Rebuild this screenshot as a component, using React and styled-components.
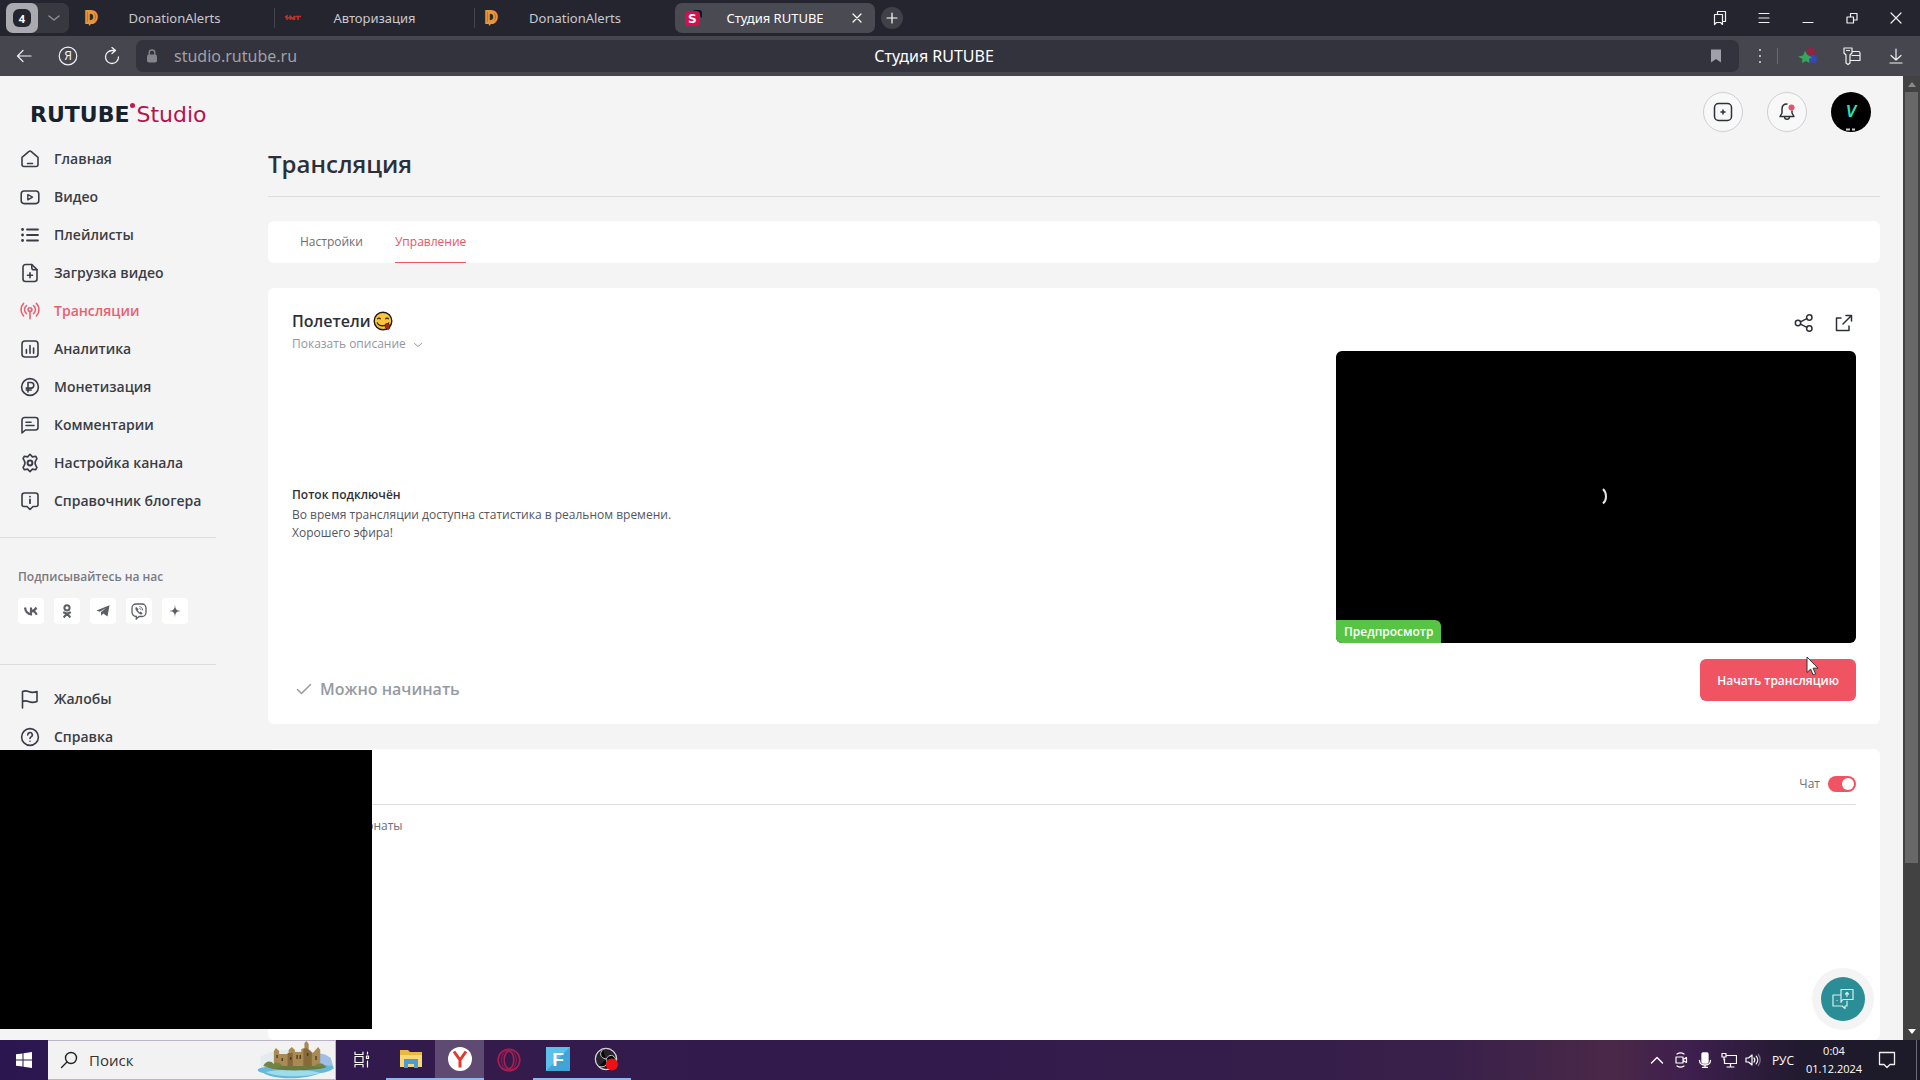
import React, { useState } from "react";
import styled, { createGlobalStyle } from "styled-components";

const GlobalStyle = createGlobalStyle`
  * {
    box-sizing: border-box;
  }

  body {
    margin: 0;
    overflow: hidden;
    font-family: "Open Sans", "Noto Sans", sans-serif;
    color: #2d3038;
  }

  button, input {
    font-family: inherit;
    padding: 0;
    border: 0;
    background: none;
    color: inherit;
  }

  svg {
    display: block;
    flex: none;
  }
`;

const Desktop = styled.div`
  position: relative;
  display: flex;
  flex-direction: column;
  height: 100vh;
`;

/* ---------- browser ---------- */

const TabBar = styled.header`
  display: flex;
  align-items: center;
  height: 36px;
  flex: none;
  padding: 0 2px 0 6px;
  background: #25252f;
  color: #c9c9cf;
  font-family: "Noto Sans", sans-serif;
`;

const TabGroup = styled.div`
  display: flex;
  width: 63px;
  height: 30px;
  margin-right: 6px;
  border-radius: 7px;
  background: #383841;
`;

const TabCount = styled.button`
  display: grid;
  place-items: center;
  width: 32px;
  height: 30px;
  border-radius: 7px;
  background: #aaaab0;
`;

const TabCountValue = styled.span`
  display: grid;
  place-items: center;
  width: 18px;
  height: 18px;
  border-radius: 6px;
  background: #25252f;
  color: #fff;
  font-size: 11px;
  font-weight: 700;
`;

const GroupArrow = styled.button`
  display: grid;
  place-items: center;
  flex: 1;
  color: #8b8b93;
`;

const Tab = styled.div`
  display: flex;
  align-items: center;
  width: 200px;
  height: ${(p) => (p.$active ? 30 : 20)}px;
  padding: 0 8px;
  border-radius: ${(p) => (p.$active ? 7 : 0)}px;
  border-right: ${(p) => (p.$divider ? "1px solid #45454e" : "0")};
  background: ${(p) => (p.$active ? "#4a4a53" : "none")};
  color: ${(p) => (p.$active ? "#fff" : "#c9c9cf")};
`;

const TabTitle = styled.button`
  flex: 1;
  color: inherit;
  font-size: 13px;
  line-height: 20px;
  text-align: center;
`;

const TabIcon = styled.span`
  display: grid;
  place-items: center;
  width: 20px;
`;

const TabClose = styled.button`
  display: grid;
  place-items: center;
  width: 20px;
  height: 20px;
`;

const NewTab = styled.button`
  display: grid;
  place-items: center;
  width: 22px;
  height: 22px;
  margin-left: 6px;
  border-radius: 50%;
  background: #41414a;
  color: #fff;
`;

const ChromeButton = styled.button`
  display: grid;
  place-items: center;
  width: 44px;
  height: 36px;
  color: #f0f0f2;
`;

const Spacer = styled.div`
  flex: 1;
`;

const Toolbar = styled.div`
  display: flex;
  align-items: center;
  height: 40px;
  flex: none;
  padding: 0 2px;
  background: #46464f;
`;

const AddressBar = styled.div`
  display: flex;
  align-items: center;
  flex: 1;
  height: 32px;
  margin-left: 2px;
  padding: 0 15px 0 8px;
  border-radius: 7px;
  background: #33333d;
  font-family: "Noto Sans", sans-serif;
  font-size: 16px;
  color: #fff;
`;

const AddressSide = styled.div`
  display: flex;
  align-items: center;
  flex: 1;
  gap: 14px;
  justify-content: ${(p) => (p.$end ? "flex-end" : "flex-start")};
  color: #84848d;
`;

const AddressInput = styled.input`
  width: 300px;
  height: 24px;
  font-size: 16px;
  color: #a0a0a8;
`;

const ToolbarDivider = styled.span`
  width: 1px;
  height: 16px;
  background: #696972;
`;

const BrowserTools = styled.div`
  display: flex;
  align-items: center;
  padding-left: 4px;
`;

const SmallTool = styled(ChromeButton)`
  width: 34px;
`;

const WideTool = styled(ChromeButton)`
  padding-left: 8px;
  width: 52px;
`;

/* ---------- page ---------- */

const Viewport = styled.div`
  display: flex;
  flex: 1;
  min-height: 0;
  overflow: hidden;
  background: #f4f4f5;
`;

const Sidebar = styled.aside`
  width: 216px;
  flex: none;
`;

const Logo = styled.a`
  display: flex;
  align-items: center;
  height: 64px;
  padding: 12px 0 0 30px;
  font-family: "DejaVu Sans", sans-serif;
  font-size: 22px;
  color: #17222f;
  text-decoration: none;

  b {
    font-weight: 700;
  }

  span {
    color: #b5124f;
  }
`;

const LogoDot = styled.i`
  width: 5px;
  height: 5px;
  margin: 0 1px 18px;
  border-radius: 50%;
  background: #c8144f;
`;

const Nav = styled.nav`
  display: flex;
  flex-direction: column;
  padding-bottom: 17px;
  border-bottom: ${(p) => (p.$last ? "0" : "1px solid #dddde0")};
  padding-top: ${(p) => (p.$last ? 15 : 0)}px;
`;

const NavLink = styled.a`
  display: flex;
  align-items: center;
  gap: 14px;
  height: 38px;
  padding-left: 20px;
  color: ${(p) => (p.$active ? "#ea5f70" : "#3a3d45")};
  font-size: 14px;
  font-weight: 600;
  line-height: 20px;
  text-decoration: none;
`;

const Follow = styled.section`
  padding: 29px 0 40px 18px;
  border-bottom: 1px solid #dddde0;
`;

const FollowTitle = styled.h2`
  margin: 0 0 11px;
  color: #787a82;
  font-size: 12px;
  font-weight: 600;
  line-height: 20px;
`;

const SocialList = styled.div`
  display: flex;
  gap: 10px;
`;

const SocialLink = styled.a`
  display: grid;
  place-items: center;
  width: 26px;
  height: 26px;
  border-radius: 4px;
  background: #fff;
  color: #5c5e66;
`;

const Main = styled.main`
  display: flex;
  flex-direction: column;
  flex: 1;
  padding: 16px 23px 0 52px;
`;

const UserBar = styled.div`
  display: flex;
  justify-content: flex-end;
  gap: 24px;
  height: 56px;
  padding-right: 9px;
`;

const RoundButton = styled.button`
  display: grid;
  place-items: center;
  width: 40px;
  height: 40px;
  overflow: hidden;
  border: ${(p) => (p.$dark ? "0" : "1px solid #cfcfd3")};
  border-radius: 50%;
  background: ${(p) => (p.$dark ? "#000" : "#f8f8f9")};
`;

const PageTitle = styled.h1`
  margin: 0;
  padding-bottom: 16px;
  border-bottom: 1px solid #dddde0;
  font-size: 24px;
  font-weight: 600;
  line-height: 32px;
`;

const Card = styled.section`
  margin-top: ${(p) => p.$top || 25}px;
  padding: ${(p) => p.$pad || "0 24px"};
  flex: ${(p) => (p.$grow ? 1 : "none")};
  border-radius: 6px;
  background: #fff;
`;

const PageTabs = styled(Card)`
  display: flex;
  gap: 32px;
  padding: 0 32px;
`;

const PageTab = styled.button`
  height: 42px;
  padding-top: 1px;
  border-bottom: 1px solid ${(p) => (p.$active ? "#ea5567" : "transparent")};
  color: ${(p) => (p.$active ? "#ea5567" : "#6c6e76")};
  font-size: 12px;
  line-height: 18px;
`;

const CardHead = styled.div`
  display: flex;
  justify-content: space-between;
  height: 42px;
`;

const StreamTitle = styled.h2`
  display: flex;
  align-items: center;
  gap: 2px;
  margin: 0 0 3px;
  font-size: 16px;
  font-weight: 600;
  line-height: 24px;
`;

const DescriptionToggle = styled.button`
  display: flex;
  align-items: center;
  gap: 8px;
  color: #93979f;
  font-size: 12px;
  line-height: 16px;
`;

const Actions = styled.div`
  display: flex;
  gap: 16px;
  padding-top: 2px;
`;

const IconButton = styled.button`
  display: grid;
  place-items: center;
  width: 24px;
  height: 24px;
`;

const StreamBody = styled.div`
  display: flex;
  justify-content: space-between;
`;

const StreamStatus = styled.div`
  display: flex;
  flex-direction: column;
  justify-content: center;
  gap: 2px;
  padding-top: 34px;
  color: #54565e;
  font-size: 12px;
  line-height: 18px;

  strong {
    color: #2d3038;
    font-weight: 600;
  }
`;

const Player = styled.div`
  position: relative;
  display: grid;
  place-items: center;
  width: 520px;
  height: 292px;
  overflow: hidden;
  border-radius: 6px;
  background: #000;
`;

const PreviewBadge = styled.span`
  position: absolute;
  left: 0;
  bottom: 0;
  padding: 0 8px;
  border-radius: 0 6px 0 0;
  background: #57c544;
  color: #fff;
  font-size: 12px;
  font-weight: 600;
  line-height: 23px;
`;

const StreamFoot = styled.div`
  display: flex;
  align-items: flex-end;
  justify-content: space-between;
  padding-top: 16px;
`;

const Ready = styled.p`
  display: flex;
  align-items: center;
  gap: 8px;
  margin: 0;
  padding-left: 4px;
  color: #949ba3;
  font-size: 16px;
  font-weight: 600;
  line-height: 24px;
`;

const StartButton = styled.button`
  height: 42px;
  padding: 0 17px;
  border-radius: 6px;
  background: #f05463;
  color: #fff;
  font-size: 12px;
  font-weight: 600;
`;

const ChatHead = styled.div`
  display: flex;
  align-items: center;
  justify-content: flex-end;
  height: 56px;
  padding-top: 14px;
  border-bottom: 1px solid #dddde0;
`;

const ChatLabel = styled.label`
  display: flex;
  align-items: center;
  gap: 8px;
  color: #6c6e76;
  font-size: 12px;
  line-height: 18px;
`;

const Switch = styled.input`
  display: flex;
  align-items: center;
  justify-content: ${(p) => (p.checked ? "flex-end" : "flex-start")};
  width: 28px;
  height: 16px;
  margin: 0;
  padding: 2px;
  appearance: none;
  border-radius: 8px;
  background: ${(p) => (p.checked ? "#f05463" : "#c3c5ca")};

  &::before {
    content: "";
    width: 12px;
    height: 12px;
    border-radius: 50%;
    background: #fff;
  }
`;

const ChatTabs = styled.div`
  padding: 8px 0 0 66px;
`;

const ChatTab = styled.button`
  color: #6c6e76;
  font-size: 12px;
  line-height: 18px;
`;

const Scrollbar = styled.div`
  display: flex;
  flex-direction: column;
  align-items: center;
  justify-content: space-between;
  width: 17px;
  padding: 6px 0;
  background: #424242;
`;

const Thumb = styled.div`
  width: 13px;
  height: 81%;
  margin: 5px 0 auto;
  background: #686868;
`;

const CameraCover = styled.div`
  position: absolute;
  left: 0;
  bottom: 51px;
  width: 372px;
  height: 279px;
  background: #000;
`;

const HelpButton = styled.button`
  position: absolute;
  right: 46px;
  bottom: 50px;
  display: grid;
  place-items: center;
  width: 62px;
  height: 62px;
  border-radius: 50%;
  background: #f4f4f4;
`;

const HelpInner = styled.span`
  display: grid;
  place-items: center;
  width: 44px;
  height: 44px;
  border-radius: 50%;
  background: #2b8e96;
`;

const Cursor = styled.svg`
  position: absolute;
  left: 1806px;
  top: 656px;
`;

/* ---------- taskbar ---------- */

const Taskbar = styled.footer`
  display: flex;
  align-items: stretch;
  height: 40px;
  flex: none;
  background: linear-gradient(
    90deg,
    #2b1650 0%,
    #341b4c 25%,
    #321a4c 50%,
    #38204a 75%,
    #4a2848 84%,
    #3e1f4e 88%,
    #201a2e 94%,
    #1c1a28 100%
  );
  color: #fff;
`;

const StartMenu = styled.button`
  display: grid;
  place-items: center;
  width: 48px;
`;

const SearchBox = styled.label`
  display: flex;
  align-items: center;
  gap: 11px;
  width: 288px;
  margin-right: 1px;
  padding-left: 12px;
  border: 1px solid #b9b3c4;
  border-left: 0;
  background: #f2f2f2;
  color: #222;
`;

const SearchInput = styled.input`
  width: 120px;
  flex: 1;
  font-size: 15px;

  &::placeholder {
    color: #333;
    opacity: 1;
  }
`;

const TaskItem = styled.button`
  display: grid;
  place-items: center;
  width: 49px;
  border: 0 solid #8fb8ea;
  border-bottom-width: ${(p) => (p.$open ? 2 : 0)}px;
  background: ${(p) => (p.$active ? "#5f4a72" : "none")};
`;

const Tray = styled.div`
  display: flex;
  align-items: center;
  margin-left: auto;
`;

const TrayButton = styled.button`
  display: grid;
  place-items: center;
  width: 24px;
  height: 40px;
`;

const Language = styled.button`
  width: 36px;
  font-size: 12px;
`;

const Clock = styled.time`
  width: 66px;
  margin-right: 8px;
  font-size: 11px;
  line-height: 18px;
  text-align: center;
`;

const ShowDesktop = styled.button`
  width: 4px;
  height: 40px;
  margin-left: 17px;
  border-left: 1px solid #6d6a78;
`;

/* ---------- icons ---------- */

const Icon = ({ size = 20, width = 1.6, box = 20, children }) => (
  <svg
    width={size}
    height={size}
    viewBox={`0 0 ${box} ${box}`}
    fill="none"
    stroke="currentColor"
    strokeWidth={width}
    strokeLinecap="round"
    strokeLinejoin="round"
    aria-hidden="true"
  >
    {children}
  </svg>
);

const navIcons = {
  home: (
    <>
      <path d="M2 8.3 8.7 2.6a2 2 0 0 1 2.6 0L18 8.3V15.5a2 2 0 0 1-2 2H4a2 2 0 0 1-2-2Z" />
      <path d="M7.5 14.5h5" />
    </>
  ),
  video: (
    <>
      <rect x="1.2" y="4" width="17.6" height="12.6" rx="3" />
      <path d="M7.8 7.5v5.4l4.7-2.7Z" strokeWidth="1.4" />
    </>
  ),
  list: (
    <>
      <path d="M7 4.5h11M7 10h11M7 15.5h11" strokeWidth="1.8" />
      <path d="M2.5 4.5h.1M2.5 10h.1M2.5 15.5h.1" strokeWidth="2.8" />
    </>
  ),
  upload: (
    <>
      <path d="M11.8 1.5H5.5a2.5 2.5 0 0 0-2.5 2.5v12a2.5 2.5 0 0 0 2.5 2.5h9A2.5 2.5 0 0 0 17 16V6.6Z" />
      <path d="M11.8 1.5v3.2a2 2 0 0 0 2 2H17M10 9.7v5M7.5 12.2h5" />
    </>
  ),
  live: (
    <>
      <circle cx="10" cy="8.6" r="1.9" />
      <path d="M10 10.5v7.3M6.5 12.6a5 5 0 0 1 0-8M13.5 12.6a5 5 0 0 0 0-8M3.6 15a9 9 0 0 1 0-12.6M16.4 15a9 9 0 0 0 0-12.6" strokeWidth="1.6" />
    </>
  ),
  stats: (
    <>
      <rect x="2" y="2" width="16" height="16" rx="3" />
      <path d="M6.4 10.5v3.7M10 6.5v7.7M13.6 9v5.2" />
    </>
  ),
  money: (
    <>
      <circle cx="10" cy="10" r="8.4" />
      <path d="M8 15V5.5h3a2.7 2.7 0 0 1 0 5.6H6.2M6.2 13h5" />
    </>
  ),
  comments: (
    <>
      <path d="M2 18V5a2.5 2.5 0 0 1 2.5-2.5h11A2.5 2.5 0 0 1 18 5v7.5a2.5 2.5 0 0 1-2.5 2.5H5.4Z" />
      <path d="M6 7.2h5M6 10.5h8" />
    </>
  ),
  settings: (
    <>
      <path d="m10 1.3 2.4 2.6 3.4-.6 1.1 2.4-.8 1.2a5.5 5.5 0 0 0 0 6.2l.8 1.2-1.1 2.4-3.4-.6L10 18.7l-2.4-2.6-3.4.6-1.1-2.4.8-1.2a5.5 5.5 0 0 0 0-6.2l-.8-1.2 1.1-2.4 3.4.6Z" />
      <circle cx="10" cy="10" r="2.4" strokeWidth="2" />
    </>
  ),
  guide: (
    <>
      <path d="M2 4.5A2.5 2.5 0 0 1 4.5 2h11A2.5 2.5 0 0 1 18 4.5v9a2 2 0 0 1-2 2h-3L10 18.5 7 15.5H4a2 2 0 0 1-2-2Z" />
      <path d="M10 8.5v3.7M10 5.6v.1" strokeWidth="1.8" />
    </>
  ),
  flag: <path d="M2.5 19V2.5c2-.8 4-.8 6 0 3 1.300 5.500 1.100 8.500 0v10c-3 1.100-5.500 1.300-8.500 0-2-.8-4-.8-6 0" />,
  help: (
    <>
      <circle cx="10" cy="10" r="8.4" />
      <path d="M7.7 7.9a2.3 2.3 0 1 1 3.4 2c-.8.5-1.1.8-1.1 1.6M10 14.2v.1" />
    </>
  ),
};

const DonationIcon = () => (
  <svg width="18" height="18" viewBox="0 0 18 18" aria-hidden="true">
    <path d="M3 12h6l-3.5 5Z" fill="#e8963a" />
    <text x="1" y="14" fill="#3a2a20" stroke="#e8963a" strokeWidth="2" fontSize="17" fontWeight="700" fontFamily="Liberation Sans, sans-serif">
      D
    </text>
  </svg>
);

const RedMarkIcon = () => (
  <svg width="18" height="14" viewBox="0 0 18 14" fill="none" stroke="#c0322c" strokeWidth="1.6" aria-hidden="true">
    <path d="M1 6.5 3 5v4M3 7h3V5M6.5 9V5.5L9 8l1.5-3v4M11.5 5.5H17M14 5v4" />
  </svg>
);

const RutubeIcon = () => (
  <svg width="18" height="18" viewBox="0 0 18 18" aria-hidden="true">
    <path d="M9 1h6a3 3 0 0 1 3 3v5Z" fill="#101426" />
    <rect x="1" y="2" width="15" height="15" rx="4" fill="#d3104f" />
    <text x="4" y="14" fill="#fff" fontSize="12" fontWeight="700" fontFamily="DejaVu Sans, sans-serif">
      S
    </text>
  </svg>
);

const Emoji = () => (
  <svg width="20" height="20" viewBox="0 0 20 20" role="img" aria-label="😋">
    <circle cx="10" cy="10" r="8.8" fill="#fbc53a" stroke="#1d1a12" strokeWidth="1.4" />
    <path d="M4.3 8.3c.8-1.5 2.500-1.500 3.300 0M12.400 8.300c.8-1.500 2.500-1.500 3.300 0" fill="none" stroke="#33230c" strokeWidth="1.2" />
    <path d="M4 11.5c2 4.300 9.500 4.300 12 0" fill="none" stroke="#33230c" strokeWidth="1.3" />
    <path d="M11.5 14c1-1.200 3.300-2.200 4.300-1 1.400 1.600 1.400 4.500 0 5.300-1.500.6-3.600-1.300-4.300-4.300Z" fill="#b5281c" stroke="#4a1009" strokeWidth=".8" />
  </svg>
);

const Castle = () => (
  <svg width="78" height="38" viewBox="0 0 74 38" preserveAspectRatio="none" aria-hidden="true">
    <path d="M3 16c8-5 18-8 32-7s24 0 34 8l2 14H4Z" fill="#e3ebef" />
    <path d="M52 16c6-5 12-4 18 1l3 11-20 2Z" fill="#9dbfe8" />
    <path d="M1 28c10-5 50-6 71-3 2 3-4 6-12 7-14 7-44 7-54 0-4-1-6-2-5-4Z" fill="#63b9d6" />
    <path d="M8 31c14-3 40-3 52 1-12 4-40 5-52-1Z" fill="#9edcec" />
    <path d="M10 26c6-4 52-5 56 0-8 4-48 5-56 0Z" fill="#697a3c" />
    <path d="M16 25V10l2-3 3 3v3h9V9l3-3 3 3v2h6V8l3-1V2l2-2 2 3v5l4 4 5-6 2 3v12l-3 4Z" fill="#a98a52" />
    <path d="M44 25V8l3-1 5 5v13ZM29 25V12h5v13Z" fill="#876a3c" />
    <path d="M19 14v3M24 17v3M38 14v4M41 14v4M48 12v3M56 15v4M32 16v3" stroke="#4d3b20" strokeWidth="1.3" />
    <path d="M6 25c2-5 7-6 10-2 3-3 6-1 8 2l-8 3ZM54 26c3-5 9-5 11 0Z" fill="#738344" />
  </svg>
);

const mainLinks = [
  ["home", "Главная"],
  ["video", "Видео"],
  ["list", "Плейлисты"],
  ["upload", "Загрузка видео"],
  ["live", "Трансляции"],
  ["stats", "Аналитика"],
  ["money", "Монетизация"],
  ["comments", "Комментарии"],
  ["settings", "Настройка канала"],
  ["guide", "Справочник блогера"],
];

const extraLinks = [
  ["flag", "Жалобы"],
  ["help", "Справка"],
];

const browserTabs = [
  { title: "DonationAlerts", icon: <DonationIcon />, divider: true },
  { title: "Авторизация", icon: <RedMarkIcon />, divider: true },
  { title: "DonationAlerts", icon: <DonationIcon /> },
  { title: "Студия RUTUBE", icon: <RutubeIcon />, active: true },
];

const socials = [
  {
    name: "ВКонтакте",
    icon: (
      <svg width="14" height="10" viewBox="0 0 14 10" fill="none" stroke="currentColor" strokeWidth="2.2">
        <path d="M1 1.500c.5 4 2.500 6.500 6 6.800V1.500M12.300 1.500C11.500 3.500 10 4.800 7.500 5c2.500 0 4.200 1.300 5.300 3.800" />
      </svg>
    ),
  },
  {
    name: "Одноклассники",
    icon: (
      <svg width="10" height="15" viewBox="0 0 10 15" fill="none" stroke="currentColor" strokeWidth="2">
        <circle cx="5" cy="3.8" r="2.6" />
        <path d="M1.2 8.2c2.400 1.600 5.200 1.600 7.600 0M5 9.500 1.700 13.500M5 9.500l3.300 4" />
      </svg>
    ),
  },
  {
    name: "Telegram",
    icon: (
      <svg width="14" height="12" viewBox="0 0 14 12" fill="currentColor">
        <path d="M.5 5.500 13.500.3 11.500 11.500 7.300 8.600 5.300 10.800 4.900 7.300 10.300 2.700 3.800 6.700Z" />
      </svg>
    ),
  },
  {
    name: "Viber",
    icon: (
      <svg width="16" height="17" viewBox="0 0 16 17" fill="none" stroke="currentColor" strokeWidth="1.3">
        <path d="M5 1h6a4 4 0 0 1 4 4v4.500a4 4 0 0 1-4 4H8L5.300 16v-2.700A4 4 0 0 1 1 9.300V5a4 4 0 0 1 4-4Z" />
        <path d="M5.300 4c-1 .6-1 1.500-.3 3 1.200 2 2.500 3.400 4.500 4.300.9.300 1.600-.1 1.900-1L9.600 8.800l-.9.700c-1-.5-1.700-1.300-2-2.300l.7-.8Z" fill="currentColor" strokeWidth=".3" />
        <path d="M8.300 3.700c2 .1 3.400 1.500 3.400 3.600M8.400 5.500c1 0 1.500.6 1.600 1.600" strokeWidth=".9" />
      </svg>
    ),
  },
  {
    name: "Дзен",
    icon: (
      <svg width="12" height="14" viewBox="0 0 12 14" fill="currentColor">
        <path d="M6 0c.2 5 1 6.600 6 7-5 .4-5.800 2-6 7-.2-5-1-6.600-6-7 5-.4 5.800-2 6-7Z" />
      </svg>
    ),
  },
];

const BrowserChrome = () => (
  <>
    <TabBar>
      <TabGroup>
        <TabCount>
          <TabCountValue>4</TabCountValue>
        </TabCount>
        <GroupArrow aria-label="Группы вкладок">
          <Icon size={12} box={12}><path d="m1 4 5 4 5-4" /></Icon>
        </GroupArrow>
      </TabGroup>
      {browserTabs.map((tab, i) => (
        <Tab key={i} $active={tab.active} $divider={tab.divider}>
          <TabIcon>{tab.icon}</TabIcon>
          <TabTitle>{tab.title}</TabTitle>
          {tab.active ? (
            <TabClose aria-label="Закрыть вкладку">
              <Icon size={10} box={10} width={1.2}><path d="m1 1 8 8M9 1 1 9" /></Icon>
            </TabClose>
          ) : (
            <TabIcon />
          )}
        </Tab>
      ))}
      <NewTab aria-label="Новая вкладка">
        <Icon size={12} box={12} width={1.2}><path d="M6 1v10M1 6h10" /></Icon>
      </NewTab>
      <Spacer />
      <ChromeButton aria-label="Коллекции">
        <Icon size={16} box={16} width={1.2}>
          <path d="M2.5 4.500h8v10l-2-2h-4l-2 2ZM5.500 4.500v-3h8v10h-2.500" />
        </Icon>
      </ChromeButton>
      <ChromeButton aria-label="Меню">
        <Icon size={12} box={12} width={1.2}><path d="M1 1.500h10M1 6h10M1 10.500h10" /></Icon>
      </ChromeButton>
      <ChromeButton aria-label="Свернуть">
        <Icon size={12} box={12} width={1.2}><path d="M1 10.500h10" /></Icon>
      </ChromeButton>
      <ChromeButton aria-label="Восстановить">
        <Icon size={12} box={12} width={1.2}><path d="M1 5h6.500v6H1ZM4.500 5V1.500H11V8H7.500" /></Icon>
      </ChromeButton>
      <ChromeButton aria-label="Закрыть">
        <Icon size={12} box={12} width={1.2}><path d="m1 1 10 10M11 1 1 11" /></Icon>
      </ChromeButton>
    </TabBar>
    <Toolbar>
      <ChromeButton aria-label="Назад">
        <Icon size={16} box={16} width={1.2}><path d="M15 8H1.500M7 2.500 1.500 8 7 13.500" /></Icon>
      </ChromeButton>
      <ChromeButton aria-label="Яндекс">
        <svg width="20" height="20" viewBox="0 0 20 20">
          <circle cx="10" cy="10" r="8.8" fill="none" stroke="#f0f0f2" strokeWidth="1.2" />
          <text x="10" y="14" textAnchor="middle" fill="#f0f0f2" fontSize="12" fontFamily="Roboto, sans-serif">Я</text>
        </svg>
      </ChromeButton>
      <ChromeButton aria-label="Обновить">
        <Icon size={18} box={18} width={1.3}><path d="M9 3.500a6.500 6.500 0 1 0 6.500 6.500M9 3.500h3M9 .5l3.500 3L9 6.500" /></Icon>
      </ChromeButton>
      <AddressBar>
        <AddressSide>
          <svg width="16" height="16" viewBox="0 0 16 16">
            <rect x="3" y="6.500" width="10" height="8" rx="2" fill="currentColor" />
            <path d="M5.200 7V4.800a2.800 2.800 0 0 1 5.600 0V7" fill="none" stroke="currentColor" strokeWidth="1.4" />
          </svg>
          <AddressInput aria-label="Адрес" defaultValue="studio.rutube.ru" />
        </AddressSide>
        <span>Студия RUTUBE</span>
        <AddressSide $end>
          <svg width="16" height="16" viewBox="0 0 16 16" fill="#a0a0a8">
            <path d="M3 1.500h10v13l-5-3.500-5 3.500Z" />
          </svg>
        </AddressSide>
      </AddressBar>
      <BrowserTools>
        <SmallTool aria-label="Ещё">
          <Icon size={16} box={16} width={1.8}><path d="M8 2v.1M8 8v.1M8 14v.1" /></Icon>
        </SmallTool>
        <ToolbarDivider />
        <WideTool aria-label="Расширение">
          <svg width="20" height="18" viewBox="0 0 20 18">
            <circle cx="13" cy="5" r="4.500" fill="#8e2547" />
            <circle cx="15" cy="12" r="4" fill="#3547b5" />
            <path d="M7 4 9.500 8 14 10.500l-3 1.500.5 4L8 14l-4 2 .5-4L0 9.500l5-1Z" fill="#39a55c" />
          </svg>
        </WideTool>
        <ChromeButton aria-label="Пароли">
          <Icon size={20} width={1.2}>
            <path d="M2 2h8v5l-2 2v8l-2 1.500L4 17V9L2 7ZM4.500 4.500h3M10 5.500h6.500a1.500 1.500 0 0 1 1.500 1.500v7.500h-10M10 9.500h8" />
          </Icon>
        </ChromeButton>
        <ChromeButton aria-label="Загрузки">
          <Icon size={16} box={16} width={1.2}><path d="M8 1v11M3 7.500 8 12l5-4.500M2 15h12" /></Icon>
        </ChromeButton>
      </BrowserTools>
    </Toolbar>
  </>
);

const StudioSidebar = () => (
  <Sidebar>
    <Logo href="#">
      <b>RUTUBE</b>
      <LogoDot />
      <span>Studio</span>
    </Logo>
    <Nav>
      {mainLinks.map(([icon, label]) => (
        <NavLink href="#" key={icon} $active={icon === "live"}>
          <Icon>{navIcons[icon]}</Icon>
          {label}
        </NavLink>
      ))}
    </Nav>
    <Follow>
      <FollowTitle>Подписывайтесь на нас</FollowTitle>
      <SocialList>
        {socials.map((item) => (
          <SocialLink href="#" key={item.name} aria-label={item.name}>
            {item.icon}
          </SocialLink>
        ))}
      </SocialList>
    </Follow>
    <Nav $last>
      {extraLinks.map(([icon, label]) => (
        <NavLink href="#" key={icon}>
          <Icon>{navIcons[icon]}</Icon>
          {label}
        </NavLink>
      ))}
    </Nav>
  </Sidebar>
);

const StreamCard = () => (
  <Card $pad="21px 24px 23px">
    <CardHead>
      <div>
        <StreamTitle>
          Полетели
          <Emoji />
        </StreamTitle>
        <DescriptionToggle>
          Показать описание
          <Icon size={8} box={8} width={1}><path d="m.5 3.500 3.500 3 3.500-3" /></Icon>
        </DescriptionToggle>
      </div>
      <Actions>
        <IconButton aria-label="Поделиться">
          <Icon width={1.5}>
            <circle cx="4" cy="10" r="2.700" />
            <circle cx="15.300" cy="4.500" r="2.700" />
            <circle cx="15.300" cy="15.500" r="2.700" />
            <path d="m6.500 8.800 6.300-3.100M6.500 11.200l6.300 3.100" />
          </Icon>
        </IconButton>
        <IconButton aria-label="Открыть в новой вкладке">
          <Icon width={1.5}>
            <path d="M7 5H2.500v12.500H15V13M9 11l8-8M12 2.500h5.500V8" />
          </Icon>
        </IconButton>
      </Actions>
    </CardHead>
    <StreamBody>
      <StreamStatus>
        <strong>Поток подключён</strong>
        <span>
          Во время трансляции доступна статистика в реальном времени.
          <br />
          Хорошего эфира!
        </span>
      </StreamStatus>
      <Player>
        <svg width="24" height="24" viewBox="0 0 24 24" fill="none" stroke="#e6e6e6" strokeWidth="2">
          <path d="M19 4c4 4 4 11 0 14.500" />
        </svg>
        <PreviewBadge>Предпросмотр</PreviewBadge>
      </Player>
    </StreamBody>
    <StreamFoot>
      <Ready>
        <Icon size={16} box={16} width={1.5}><path d="m1.500 8.500 4 4 9-9" /></Icon>
        Можно начинать
      </Ready>
      <StartButton>Начать трансляцию</StartButton>
    </StreamFoot>
  </Card>
);

const WindowsTaskbar = () => (
  <Taskbar>
    <StartMenu aria-label="Пуск">
      <svg width="16" height="16" viewBox="0 0 16 16" fill="#fff">
        <path d="M0 2.300 6.500 1.400v6.100H0ZM7.500 1.200 16 0v7.500H7.500ZM0 8.500h6.500v6.100L0 13.700ZM7.500 8.500H16V16l-8.500-1.200Z" />
      </svg>
    </StartMenu>
    <SearchBox>
      <Icon size={18} box={18} width={1.4}>
        <circle cx="11" cy="7" r="5.500" />
        <path d="M7 11 1.500 16.500" />
      </Icon>
      <SearchInput placeholder="Поиск" aria-label="Поиск" />
      <Castle />
    </SearchBox>
    <TaskItem aria-label="Представление задач">
      <Icon size={18} box={18} width={1.2}>
        <path d="M2 1v2.500h8V1M2 5.500h8v6H2ZM2 16v-2.500h8V16M14.500 1v2M14.500 10v6M13.500 5h2v2.500h-2Z" />
      </Icon>
    </TaskItem>
    <TaskItem aria-label="Проводник" $open>
      <svg width="22" height="20" viewBox="0 0 22 20">
        <path d="M0 1h8l2 2h12v15H0Z" fill="#e9b840" />
        <path d="M0 6h22v12H0Z" fill="#f9d873" />
        <path d="M4 10h14v9h-4v-4H8v4H4Z" fill="#4a9bd6" />
      </svg>
    </TaskItem>
    <TaskItem aria-label="Яндекс Браузер" $open $active>
      <svg width="24" height="24" viewBox="0 0 24 24">
        <circle cx="12" cy="12" r="12" fill="#fff" />
        <path d="M6 4.500 12 13M18 4.500 12 13v7.500" stroke="#e5372c" strokeWidth="3" fill="none" />
      </svg>
    </TaskItem>
    <TaskItem aria-label="Opera GX">
      <svg width="24" height="24" viewBox="0 0 24 24" fill="none" stroke="#b01c4f" strokeWidth="1.6">
        <circle cx="12" cy="12" r="10.800" />
        <ellipse cx="12" cy="12" rx="4.800" ry="8.800" />
        <ellipse cx="12" cy="12" rx="7.500" ry="10" strokeWidth=".8" />
      </svg>
    </TaskItem>
    <TaskItem aria-label="Fortnite" $open>
      <svg width="24" height="24" viewBox="0 0 24 24">
        <rect width="24" height="24" fill="#3fa5d8" />
        <path d="M0 0h24L0 24Z" fill="#5cc0e8" />
        <text x="12" y="19" textAnchor="middle" fill="#fff" fontSize="19" fontWeight="700" fontFamily="Liberation Sans Narrow, Liberation Sans, sans-serif">F</text>
      </svg>
    </TaskItem>
    <TaskItem aria-label="OBS Studio" $open>
      <svg width="25" height="24" viewBox="0 0 25 24">
        <circle cx="12" cy="12" r="10.800" fill="#c8c8cc" stroke="#d8d8dc" strokeWidth="1" />
        <circle cx="12" cy="12" r="10" fill="#26242a" />
        <path d="M12 12c-6-1-7-6-3-9.500M12 12c3-5 8-5 10 1M12 12c3 5-1 9-7 7.500" fill="#08080a" stroke="#c8c8cc" strokeWidth="1" />
        <circle cx="18" cy="17.500" r="6" fill="#ee1111" />
      </svg>
    </TaskItem>
    <Tray>
      <TrayButton aria-label="Скрытые значки">
        <Icon size={14} box={14} width={1.4}><path d="m1.500 10 5.500-5.500 5.500 5.500" /></Icon>
      </TrayButton>
      <TrayButton aria-label="Камера">
        <Icon size={16} box={16} width={1.2}>
          <path d="M3 5h7v6H3ZM10 7.500 13.500 5.500v5L10 8.500M4 2c2-1.300 5-1.300 7 0M4 14c2 1.300 5 1.300 7 0" />
        </Icon>
      </TrayButton>
      <TrayButton aria-label="Микрофон">
        <Icon size={16} box={16} width={1.3}>
          <rect x="5" y="1" width="6" height="10" rx="1" fill="currentColor" />
          <path d="M2.500 8.500c0 6 11 6 11 0M8 13v2.500M5.500 15.500h5" />
        </Icon>
      </TrayButton>
      <TrayButton aria-label="Сеть">
        <Icon size={16} box={16} width={1.2}>
          <path d="M6 3.500h9.500v8H3.500V7M1 1.500h4v3.500H1ZM3 5v3M9.500 11.500V15M6 15h7" />
        </Icon>
      </TrayButton>
      <TrayButton aria-label="Громкость">
        <Icon size={16} box={16} width={1.2}>
          <path d="M1 6h2.500L7 3v10L3.500 10H1ZM9 6c1 1.200 1 2.800 0 4M11.200 4.200c2 2.200 2 5.400 0 7.600" />
          <path d="M13.300 2.500c2.500 3 2.500 8 0 11" opacity=".4" />
        </Icon>
      </TrayButton>
      <Language>РУС</Language>
      <Clock>
        0:04
        <br />
        01.12.2024
      </Clock>
      <TrayButton as={ChromeButton} aria-label="Уведомления">
        <Icon size={18} box={18} width={1.3}><path d="M1.500 1.500h15v12H12l-3 3-3-3H1.500Z" /></Icon>
      </TrayButton>
      <ShowDesktop aria-label="Свернуть все окна" />
    </Tray>
  </Taskbar>
);

const App = () => {
  const [tab, setTab] = useState("control");
  const [chat, setChat] = useState(true);

  return (
    <Desktop>
      <GlobalStyle />
      <BrowserChrome />
      <Viewport>
        <StudioSidebar />
        <Main>
          <UserBar>
            <RoundButton aria-label="Добавить">
              <Icon width={1.5}>
                <rect x="1.500" y="1.500" width="17" height="17" rx="4" />
                <path d="M10 8v4M8 10h4" />
              </Icon>
            </RoundButton>
            <RoundButton aria-label="Уведомления">
              <Icon width={1.5}>
                <path d="M10 2c-3.300 0-5 2.300-5 5v4L3 14.500h14L15 11V9M7.500 15c.3 3 4.700 3 5 0" />
                <circle cx="14.500" cy="5.500" r="3" fill="#e45368" stroke="none" />
              </Icon>
            </RoundButton>
            <RoundButton $dark aria-label="Профиль">
              <svg width="40" height="40" viewBox="0 0 40 40">
                <text x="20" y="25" textAnchor="middle" fill="#2fdfb5" fontSize="16" fontWeight="700" fontStyle="italic" fontFamily="Liberation Sans, sans-serif">V</text>
                <path d="M15 37.500h4M21 37.500h3" stroke="#ccc" strokeWidth="2" />
              </svg>
            </RoundButton>
          </UserBar>
          <PageTitle>Трансляция</PageTitle>
          <PageTabs $top={24}>
            <PageTab $active={tab === "settings"} onClick={() => setTab("settings")}>
              Настройки
            </PageTab>
            <PageTab $active={tab === "control"} onClick={() => setTab("control")}>
              Управление
            </PageTab>
          </PageTabs>
          <StreamCard />
          <Card $grow>
            <ChatHead>
              <ChatLabel>
                Чат
                <Switch type="checkbox" checked={chat} onChange={() => setChat(!chat)} />
              </ChatLabel>
            </ChatHead>
            <ChatTabs>
              <ChatTab>Донаты</ChatTab>
            </ChatTabs>
          </Card>
        </Main>
        <Scrollbar>
          <svg width="8" height="5" viewBox="0 0 8 5"><path d="M0 5 4 0l4 5Z" fill="#8a8a8a" /></svg>
          <Thumb />
          <svg width="8" height="5" viewBox="0 0 8 5"><path d="m0 0 4 5 4-5Z" fill="#fff" /></svg>
        </Scrollbar>
      </Viewport>
      <WindowsTaskbar />
      <CameraCover />
      <HelpButton aria-label="Помощь">
        <HelpInner>
          <Icon size={22} box={22} width={1.2}>
            <path d="M9 1.500h12v10H11L9 14ZM9 7H1v11h9l3 2.500V18h2v-5M15 4.500v4M13.500 6 15 4.500 16.500 6M5 12.500h.1M9 14.500h.1" stroke="#d5eef0" />
          </Icon>
        </HelpInner>
      </HelpButton>
      <Cursor width="13" height="20" viewBox="0 0 13 20" aria-hidden="true">
        <path d="M1 1v15.500l3.600-3.400 2.500 5.800 2.500-1.100-2.500-5.600H12Z" fill="#fff" stroke="#333" strokeWidth="1" />
      </Cursor>
    </Desktop>
  );
};

export default App;
